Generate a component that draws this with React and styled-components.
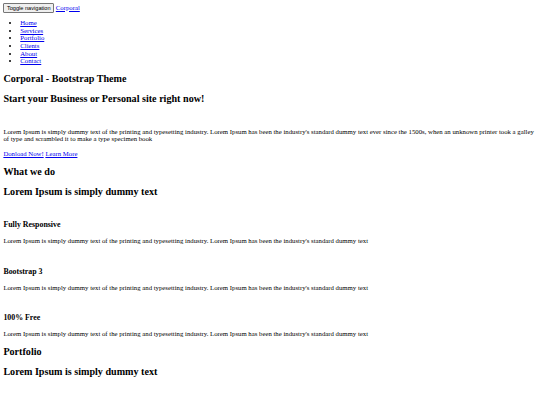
import React from 'react';
import styled, { createGlobalStyle } from 'styled-components';

// the reference is a 1280px wide page shot down to 540px
const S = 0.421875;
const px = (n) => `${n * S}px`;

const GlobalStyle = createGlobalStyle`
  body {
    margin: ${px(8)};
    font-family: "Liberation Serif", "Times New Roman", serif;
    font-size: ${px(16)};
    line-height: ${px(18)};
    color: #000;
    background: #fff;
  }
  a {
    color: #0000ee;
  }
`;

const Nav = styled.nav`
  display: block;
`;

const ToggleButton = styled.button`
  font-family: "Liberation Sans", Arial, sans-serif;
  font-size: ${px(13.333)};
  line-height: ${px(15)};
  padding: ${px(1)} ${px(6)};
  margin: 0;
  border: 1px solid #767676;
  border-radius: 1px;
  background: #efefef;
  color: #000;
  vertical-align: baseline;
`;

const Brand = styled.a`
  margin-left: ${px(4)};
`;

const Menu = styled.ul`
  margin: 1em 0;
  padding-left: ${px(40)};
  list-style: disc;
`;

const Heading = styled.h2`
  font-size: 1.5em;
  line-height: ${px(27.6)};
  margin: 0.83em 0;
  font-weight: bold;
`;

const SubHeading = styled.h3`
  font-size: 1.17em;
  line-height: ${px(21.5)};
  margin: 1em 0;
  font-weight: bold;
`;

const Text = styled.p`
  margin: 1em 0;
`;

const Hero = styled.header`
  display: block;
`;

const HeroBody = styled.div`
  padding-top: ${px(18)};
`;

const Section = styled.section`
  display: block;
`;

const Features = styled.div`
  display: block;
`;

const Feature = styled.div`
  padding-top: ${px(18)};
  &:first-child {
    padding-top: ${px(15)};
  }
`;

const links = ['Home', 'Services', 'Portfolio', 'Clients', 'About', 'Contact'];

const features = ['Fully Responsive', 'Bootstrap 3', '100% Free'];

const dummy =
  "Lorem Ipsum is simply dummy text of the printing and typesetting industry. Lorem Ipsum has been the industry's standard dummy text";

export default function App() {
  return (
    <>
      <GlobalStyle />
      <Nav>
        <ToggleButton type="button">Toggle navigation</ToggleButton>
        <Brand href="#">Corporal</Brand>
        <Menu>
          {links.map((l) => (
            <li key={l}>
              <a href="#">{l}</a>
            </li>
          ))}
        </Menu>
      </Nav>
      <Hero>
        <Heading>Corporal - Bootstrap Theme</Heading>
        <Heading>Start your Business or Personal site right now!</Heading>
        <HeroBody>
          <Text>
            {dummy} ever since the 1500s, when an unknown printer took a galley of type and
            scrambled it to make a type specimen book
          </Text>
          <Text>
            <a href="#">Donload Now!</a> <a href="#">Learn More</a>
          </Text>
        </HeroBody>
      </Hero>
      <Section>
        <Heading>What we do</Heading>
        <Heading>Lorem Ipsum is simply dummy text</Heading>
        <Features>
          {features.map((f) => (
            <Feature key={f}>
              <SubHeading>{f}</SubHeading>
              <Text>{dummy}</Text>
            </Feature>
          ))}
        </Features>
      </Section>
      <Section>
        <Heading>Portfolio</Heading>
        <Heading>Lorem Ipsum is simply dummy text</Heading>
      </Section>
    </>
  );
}
